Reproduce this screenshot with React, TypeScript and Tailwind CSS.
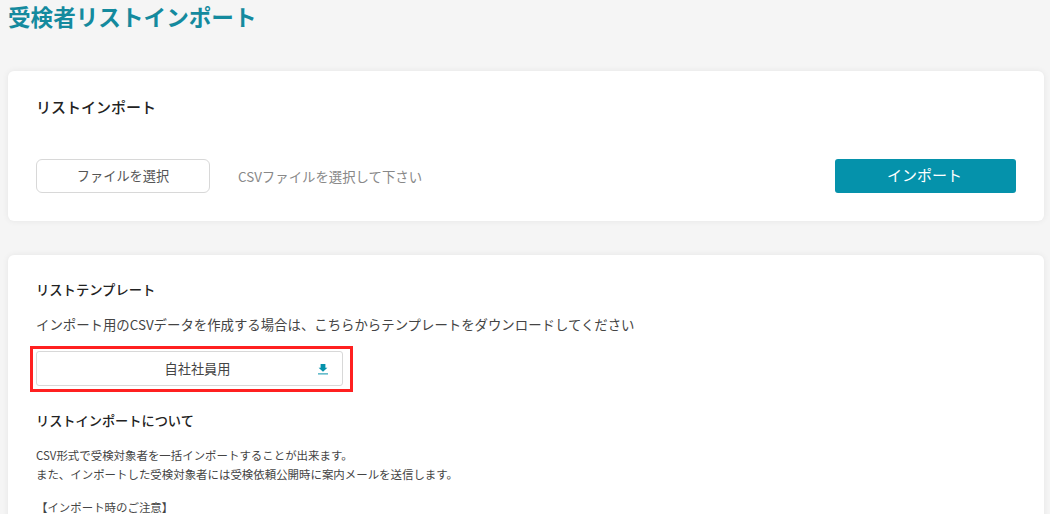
const font = { fontFamily: '"Noto Sans CJK JP", "Noto Sans", sans-serif' };

function DownloadIcon() {
  return (
    <svg width="12" height="12" viewBox="0 0 12 12" className="text-[#0592ab]">
      <path d="M3.6 1h4.8v3.8h2L6 8.8 1.6 4.8h2z" fill="currentColor" />
      <rect x="1" y="10.4" width="10" height="1" fill="currentColor" />
    </svg>
  );
}

export default function App() {
  return (
    <div style={font} className="h-[514px] w-[1050px] overflow-hidden bg-[#f5f5f5] pl-2 pr-1.5 text-[#333]">
      <h1 className="h-[71px] text-[22.6px] leading-[33px] font-bold text-[#148a9e]">受検者リストインポート</h1>

      <section className="h-[150px] rounded-md bg-white px-7 pt-[25px] shadow-[0_0_6px_rgba(0,0,0,0.07)]">
        <h2 className="text-[15px] leading-[22px] font-medium text-[#222]">リストインポート</h2>
        <div className="mt-[41px] flex items-center">
          <button className="h-[34px] w-[174px] rounded-md border-[1.5px] border-[#d8d8d8] bg-white pb-[1px] text-[13.2px] text-[#555]">
            ファイルを選択
          </button>
          <span className="ml-7 text-[13.4px] text-[#888]">CSVファイルを選択して下さい</span>
          <button className="ml-auto h-[34px] w-[181px] rounded-[3px] bg-[#0592ab] pr-[2px] pb-[1px] text-[15px] text-white">
            インポート
          </button>
        </div>
      </section>

      <section className="mt-[34px] h-[300px] rounded-md bg-white px-7 pt-6 shadow-[0_0_6px_rgba(0,0,0,0.07)]">
        <h2 className="text-[13.3px] leading-[22px] font-medium text-[#222]">リストテンプレート</h2>
        <p className="mt-[13px] text-[13.4px] leading-[20px] text-[#444]">
          インポート用のCSVデータを作成する場合は、こちらからテンプレートをダウンロードしてください
        </p>
        <div className="relative mt-[17px] w-[307px]">
          <button className="relative flex h-[35px] w-full items-center justify-center rounded-[3px] border-[1.5px] border-[#d8d8d8] bg-white pl-4 text-[13.2px] text-[#444]">
            自社社員用
            <span className="absolute top-[11px] right-[13px]">
              <DownloadIcon />
            </span>
          </button>
          <div className="absolute -top-[5px] -right-[10px] -bottom-[6px] -left-[6px] border-[3px] border-[#ff2020]" />
        </div>
        <h2 className="mt-[24px] text-[13.2px] leading-[22px] font-medium text-[#222]">リストインポートについて</h2>
        <div className="mt-[14px] text-[11.45px] leading-[18.5px] text-[#444]">
          <p>CSV形式で受検対象者を一括インポートすることが出来ます。</p>
          <p>また、インポートした受検対象者には受検依頼公開時に案内メールを送信します。</p>
          <p className="mt-[15px]">【インポート時のご注意】</p>
        </div>
      </section>
    </div>
  );
}
